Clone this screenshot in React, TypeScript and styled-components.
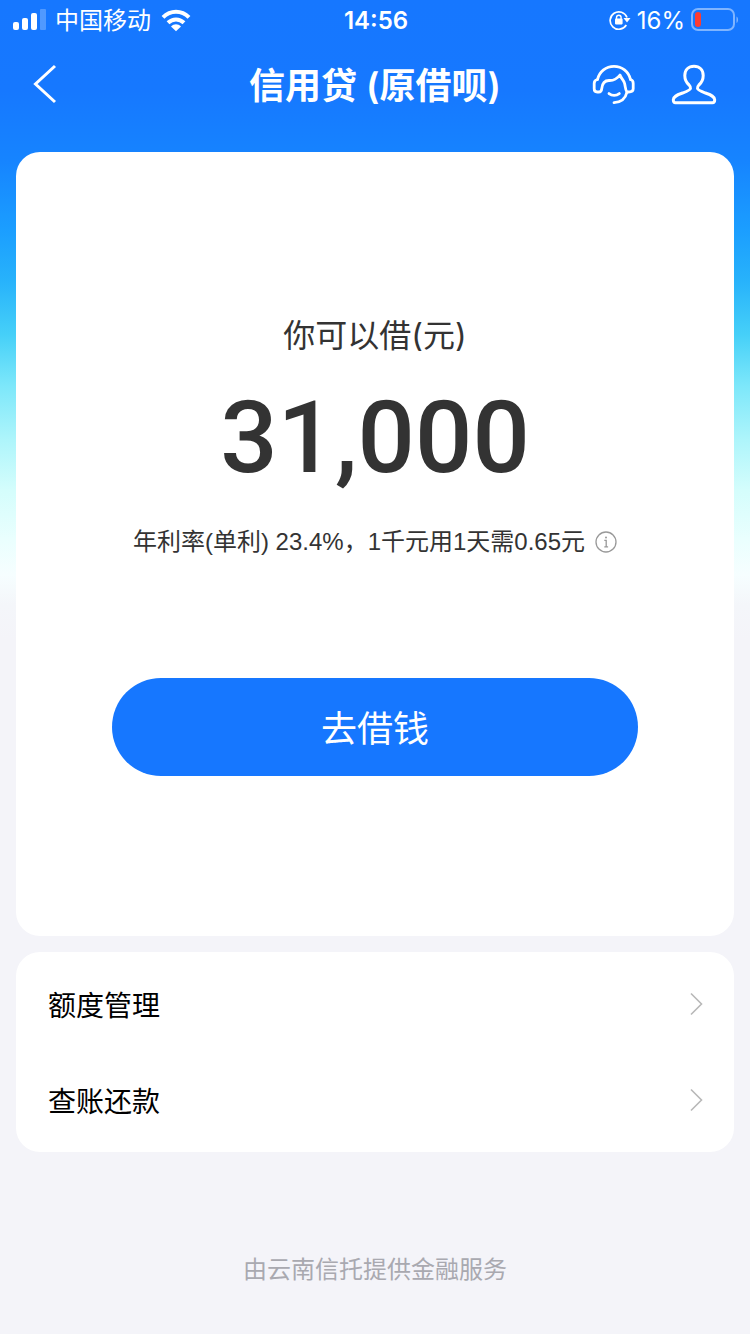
import React from "react";
import styled, { createGlobalStyle } from "styled-components";

const GlobalStyle = createGlobalStyle`
  *, *::before, *::after { box-sizing: border-box; }
  body {
    margin: 0;
    background: #f4f4f9;
    color: #333;
    font-family: Inter, "Noto Sans CJK SC", sans-serif;
  }
  button { font: inherit; color: inherit; border: 0; padding: 0; background: none; cursor: pointer; }
  svg { display: block; flex: none; }
`;

const Page = styled.div`
  min-height: 100vh;
  padding-bottom: 44px;
  background: linear-gradient(
      180deg,
      #1677ff 0,
      #1678ff 90px,
      #1684ff 160px,
      #1b9eff 230px,
      #27b2fb 280px,
      #46d0f8 335px,
      #7ce7fa 385px,
      #aef5fb 440px,
      #d4fdfc 490px,
      #eafffe 540px,
      #f6feff 575px,
      #f4f6fa 605px,
      #f4f4f9 640px
    )
    no-repeat;
`;

const StatusBar = styled.div`
  display: grid;
  grid-template-columns: 1fr auto 1fr;
  align-items: center;
  height: 40px;
  padding: 0 11px 0 13px;
  color: #fff;
  font-size: 24px;
`;

const StatusGroup = styled.div<{ $end?: boolean }>`
  display: flex;
  align-items: center;
  justify-content: ${(p) => (p.$end ? "flex-end" : "flex-start")};
  gap: ${(p) => (p.$end ? "6px" : "9px")};
`;

const StatusText = styled.span`
  padding-top: 2px;
  line-height: 38px;
`;

const Clock = styled.time`
  padding-top: 2px;
  line-height: 38px;
  font-weight: 600;
`;

const NavBar = styled.header`
  display: grid;
  grid-template-columns: 1fr auto 1fr;
  align-items: center;
  height: 88px;
  padding: 0 32px;
  color: #fff;
`;

const BackButton = styled.button`
  padding-top: 4px;
`;

const Title = styled.h1`
  margin: 0;
  padding-top: 4px;
  font-size: 36px;
  line-height: 48px;
  font-weight: 600;
`;

const NavActions = styled.div`
  display: flex;
  justify-content: flex-end;
  gap: 32px;
`;

const Main = styled.main`
  display: flex;
  flex-direction: column;
  gap: 16px;
  padding: 24px 16px 0;
`;

const Card = styled.section`
  background: #fff;
  border-radius: 24px;
`;

const LoanCard = styled(Card)`
  display: flex;
  flex-direction: column;
  align-items: center;
  padding: 162px 96px 160px;
`;

const Label = styled.p`
  margin: 0;
  font-size: 32px;
  line-height: 44px;
`;

const Amount = styled.strong`
  margin-top: 16px;
  font-family: Roboto, sans-serif;
  font-size: 101px;
  line-height: 128px;
  font-weight: 500;
`;

const Rate = styled.p`
  display: flex;
  align-items: center;
  gap: 10px;
  margin: 22px 0 0;
  font-family: "Liberation Sans", "Noto Sans CJK SC", sans-serif;
  font-size: 24px;
  line-height: 36px;
  white-space: nowrap;
`;

const InfoButton = styled.button`
  color: #999;
`;

const BorrowButton = styled.button`
  width: 100%;
  height: 98px;
  margin-top: 118px;
  padding-top: 4px;
  border-radius: 49px;
  background: #1677ff;
  color: #fff;
  font-size: 36px;
  line-height: 48px;
`;

const Menu = styled(Card)`
  display: flex;
  flex-direction: column;
  padding: 4px 0;
`;

const MenuLink = styled.a`
  display: flex;
  align-items: center;
  justify-content: space-between;
  height: 96px;
  padding: 0 31px 0 32px;
  color: #000;
  font-size: 28px;
  text-decoration: none;
`;

const MenuText = styled.span`
  padding-top: 4px;
  line-height: 40px;
`;

const Footer = styled.footer`
  padding-top: 100px;
  color: #a9a9b0;
  font-size: 24px;
  line-height: 36px;
  text-align: center;
`;

const SignalIcon = () => (
  <svg width="33" height="22" viewBox="0 0 33 22" fill="currentColor" aria-hidden="true">
    <rect x="0" y="13" width="6" height="8" rx="2" />
    <rect x="9" y="9" width="6" height="12" rx="2" />
    <rect x="18" y="4" width="6" height="17" rx="2" />
    <rect x="27" y="0" width="6" height="21" rx="1" opacity="0.25" />
  </svg>
);

const WifiIcon = () => (
  <svg width="32" height="24" viewBox="0 0 32 24" fill="none" stroke="currentColor" strokeWidth="4" aria-hidden="true">
    <path d="M3 9.4C10.5 1.9 21.500 1.9 29 9.4" />
    <path d="M8 14.8c4.800-4.500 11.200-4.500 16 0" />
    <path d="M11 18.400c3-2.800 7-2.800 10 0L16 23.300z" fill="currentColor" stroke="none" />
  </svg>
);

const RotationLockIcon = () => (
  <svg width="22" height="22" viewBox="0 0 22 22" fill="none" stroke="currentColor" strokeWidth="1.7" aria-hidden="true">
    <path d="M18 8.500a8.700 8.700 0 1 0-.7 7.500" />
    <path d="M14.500 9h7l-3.500 4.500z" fill="currentColor" stroke="none" />
    <path d="M7.500 10V8.600a2.300 2.300 0 0 1 4.600 0V10" strokeWidth="1.400" />
    <rect x="6" y="9.600" width="7.600" height="5.800" rx="0.800" fill="currentColor" stroke="none" />
  </svg>
);

const BatteryIcon = () => (
  <svg width="48" height="24" viewBox="0 0 48 24" aria-hidden="true">
    <rect x="1" y="1" width="42" height="21" rx="6" fill="none" stroke="#fff" strokeOpacity="0.45" strokeWidth="2" />
    <rect x="4" y="4" width="6" height="15" rx="3" fill="#ff3b30" />
    <path d="M45.500 8.500c2 1.200 2 5.300 0 6.500z" fill="#fff" fillOpacity="0.45" />
  </svg>
);

const BackIcon = () => (
  <svg width="26" height="40" viewBox="0 0 26 40" fill="none" stroke="currentColor" strokeWidth="3" aria-hidden="true">
    <path d="M23 2L3.500 20 23 38" />
  </svg>
);

const ServiceIcon = () => (
  <svg
    width="48"
    height="48"
    viewBox="0 0 48 48"
    fill="none"
    stroke="currentColor"
    strokeWidth="2.800"
    strokeLinecap="round"
    strokeLinejoin="round"
    aria-hidden="true"
  >
    <path d="M7.500 19.500C9.500 11.500 16 6.400 24 6.400S38.500 11.500 40.500 19.500" />
    <path d="M7.500 19.500C5 20 4.200 21.200 4.200 23.500v5.300c0 2.200 1 3.200 3 3.200h1.600c2 0 2.700-1.200 2.900-3.200C12.200 23.500 14.500 20.500 19 20.500c5 .200 8-1.500 11-5.500 1 3.500 3.500 4.500 4.600 8.500.8 3 .7 6.500 2.300 8.500h1.700c2.800 0 4.600-.8 4.600-3.200v-5.300c0-2.300-.500-3.500-2.700-4" />
    <path d="M37 32c-1.500 6.700-6 10.300-13 10.600" />
    <path d="M19 33.600c3 2.200 7.300 2.200 10.300 0" />
  </svg>
);

const ProfileIcon = () => (
  <svg
    width="48"
    height="48"
    viewBox="0 0 48 48"
    fill="none"
    stroke="currentColor"
    strokeWidth="3"
    strokeLinejoin="round"
    aria-hidden="true"
  >
    <path d="M20.500 28.500c.300-1.400-.300-2.400-1.400-3.500C16.200 22.500 14.800 19 14.800 15.500c0-5.500 3.700-9.200 9.200-9.200s9.200 3.700 9.200 9.200c0 3.500-1.400 7-4.300 9.500-1.100 1.100-1.700 2.100-1.400 3.500.400 1.700 3.500 2.800 8 4.500 5.500 2 9.200 3.200 9.200 6.800 0 2-.700 2.900-2.200 2.900h-37c-1.500 0-2.200-.900-2.200-2.900 0-3.600 3.700-4.800 9.200-6.800 4.500-1.700 7.600-2.800 8-4.500z" />
  </svg>
);

const InfoIcon = () => (
  <svg width="22" height="22" viewBox="0 0 22 22" fill="none" stroke="currentColor" strokeWidth="1.300" aria-hidden="true">
    <circle cx="11" cy="11" r="10" />
    <path d="M9.300 9.300h1.900v6.500M9.300 15.800h3.800" />
    <circle cx="11" cy="6.500" r="1" fill="currentColor" stroke="none" />
  </svg>
);

const ChevronIcon = () => (
  <svg width="14" height="24" viewBox="0 0 14 24" fill="none" stroke="#b8b8b8" strokeWidth="1.600" aria-hidden="true">
    <path d="M2 1.500L12.500 12 2 22.500" />
  </svg>
);

const menuItems = ["额度管理", "查账还款"];

export default function App() {
  return (
    <>
      <GlobalStyle />
      <Page>
        <StatusBar>
          <StatusGroup>
            <SignalIcon />
            <StatusText>中国移动</StatusText>
            <WifiIcon />
          </StatusGroup>
          <Clock>14:56</Clock>
          <StatusGroup $end>
            <RotationLockIcon />
            <StatusText>16%</StatusText>
            <BatteryIcon />
          </StatusGroup>
        </StatusBar>
        <NavBar>
          <div>
            <BackButton aria-label="返回">
              <BackIcon />
            </BackButton>
          </div>
          <Title>信用贷 (原借呗)</Title>
          <NavActions>
            <button aria-label="客服">
              <ServiceIcon />
            </button>
            <button aria-label="我的">
              <ProfileIcon />
            </button>
          </NavActions>
        </NavBar>
        <Main>
          <LoanCard>
            <Label>你可以借(元)</Label>
            <Amount>31,000</Amount>
            <Rate>
              <span>年利率(单利) 23.4%，1千元用1天需0.65元</span>
              <InfoButton aria-label="利率说明">
                <InfoIcon />
              </InfoButton>
            </Rate>
            <BorrowButton>去借钱</BorrowButton>
          </LoanCard>
          <Menu as="nav">
            {menuItems.map((item) => (
              <MenuLink href="#" key={item}>
                <MenuText>{item}</MenuText>
                <ChevronIcon />
              </MenuLink>
            ))}
          </Menu>
        </Main>
        <Footer>由云南信托提供金融服务</Footer>
      </Page>
    </>
  );
}
